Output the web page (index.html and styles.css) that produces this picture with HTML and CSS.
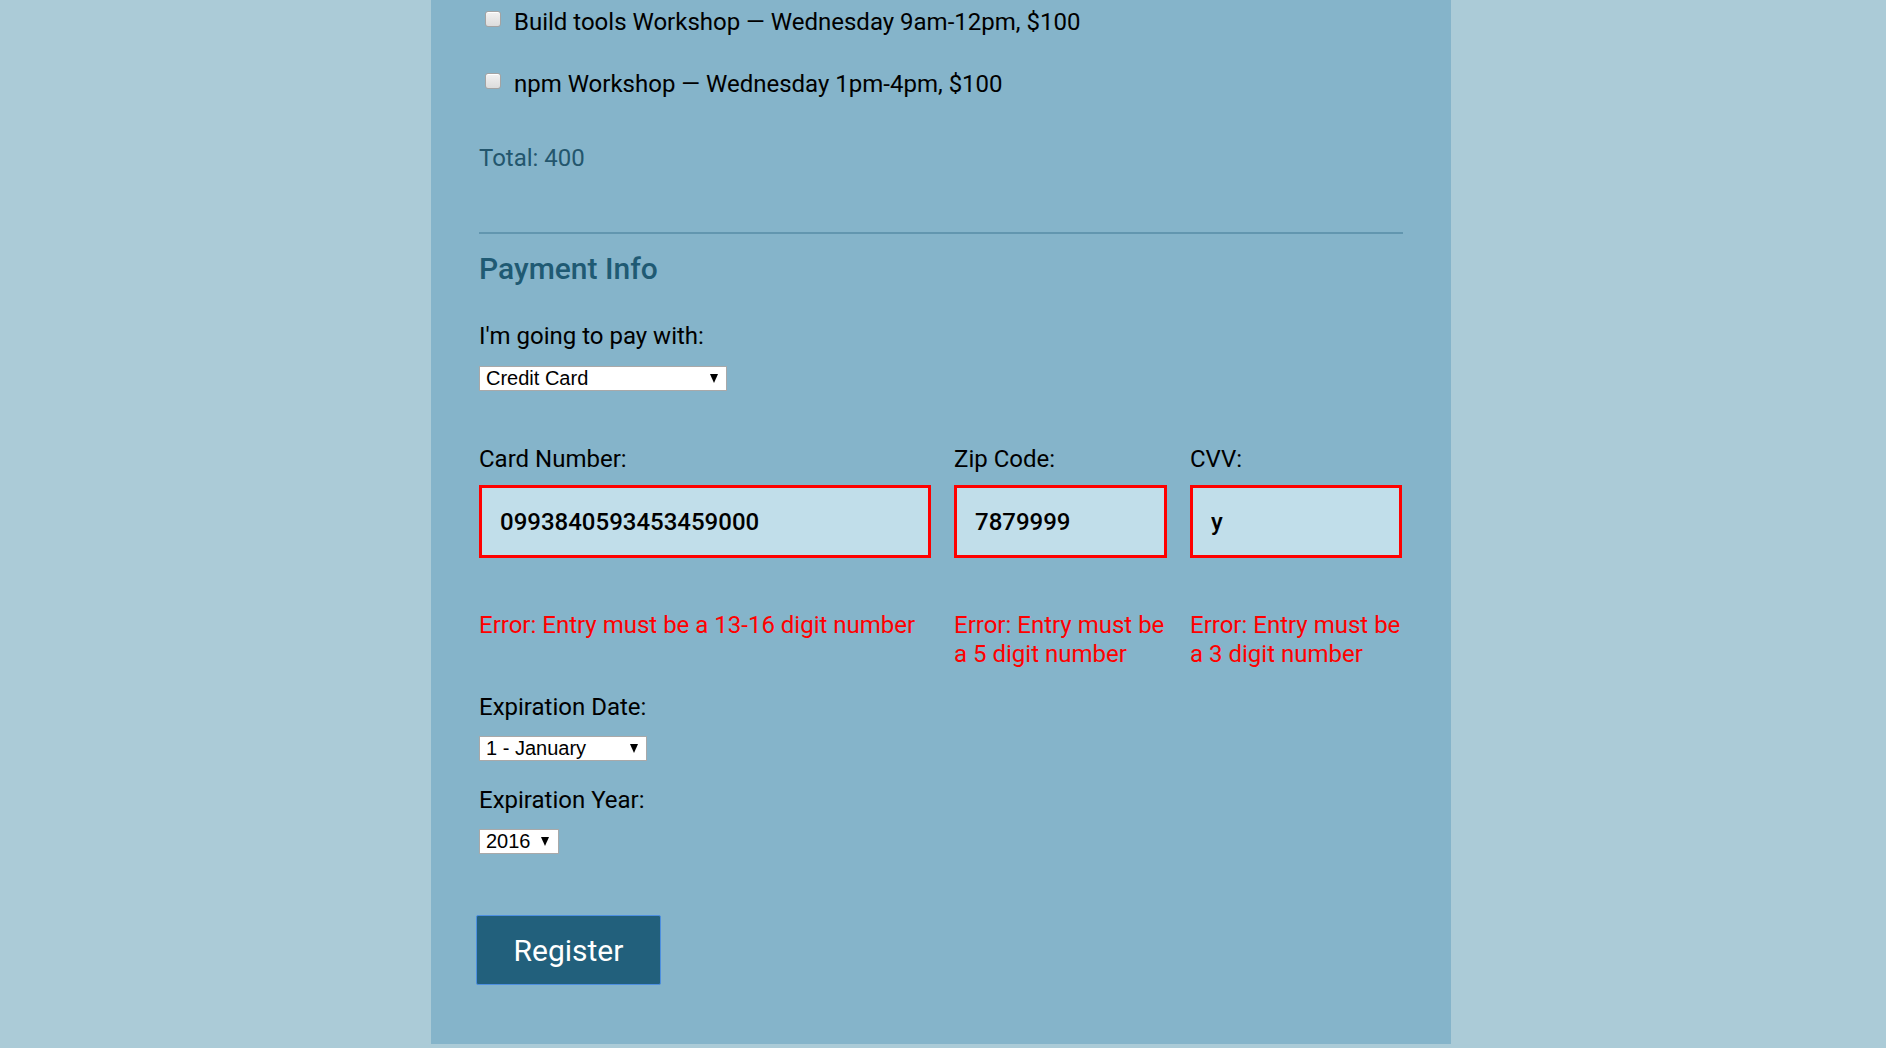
FILE: index.html
```html
<!DOCTYPE html>
<html lang="en">
<head>
<meta charset="utf-8">
<title>Conference Registration</title>
<link rel="stylesheet" href="styles.css">
</head>
<body>
<div class="container">
  <form class="form" action="#" onsubmit="return false;">
    <div class="activities">
      <label class="check"><input class="checkbox" type="checkbox" name="build-tools"> Build tools Workshop — Wednesday 9am-12pm, $100</label>
      <label class="check"><input class="checkbox" type="checkbox" name="npm"> npm Workshop — Wednesday 1pm-4pm, $100</label>
      <p class="total">Total: 400</p>
    </div>

    <div class="payment">
      <h2 class="section-title">Payment Info</h2>

      <label class="field-label" for="payment">I'm going to pay with:</label>
      <div class="select-wrap select-payment">
        <select id="payment" class="select">
          <option>Select Payment Method</option>
          <option selected>Credit Card</option>
          <option>PayPal</option>
          <option>Bitcoin</option>
        </select>
      </div>

      <div class="card-row">
        <div class="card-field">
          <label class="field-label" for="cc-num">Card Number:</label>
          <input id="cc-num" class="text-input invalid" type="text" value="0993840593453459000">
          <p class="error">Error: Entry must be a 13-16 digit number</p>
        </div>
        <div class="card-field">
          <label class="field-label" for="zip">Zip Code:</label>
          <input id="zip" class="text-input invalid" type="text" value="7879999">
          <p class="error">Error: Entry must be a 5 digit number</p>
        </div>
        <div class="card-field">
          <label class="field-label" for="cvv">CVV:</label>
          <input id="cvv" class="text-input invalid" type="text" value="y">
          <p class="error">Error: Entry must be a 3 digit number</p>
        </div>
      </div>

      <label class="field-label exp-label" for="exp-month">Expiration Date:</label>
      <div class="select-wrap select-month">
        <select id="exp-month" class="select">
          <option selected>1 - January</option>
          <option>2 - February</option>
          <option>3 - March</option>
          <option>4 - April</option>
          <option>5 - May</option>
          <option>6 - June</option>
          <option>7 - July</option>
          <option>8 - August</option>
          <option>9 - September</option>
          <option>10 - October</option>
          <option>11 - November</option>
          <option>12 - December</option>
        </select>
      </div>

      <label class="field-label exp-label exp-year-label" for="exp-year">Expiration Year:</label>
      <div class="select-wrap select-year">
        <select id="exp-year" class="select">
          <option selected>2016</option>
          <option>2017</option>
          <option>2018</option>
          <option>2019</option>
          <option>2020</option>
        </select>
      </div>
    </div>

    <button class="register" type="submit">Register</button>
  </form>
</div>
</body>
</html>
```

FILE: styles.css
```css
* {
  box-sizing: border-box;
}

html, body {
  margin: 0;
  padding: 0;
}

body {
  background: #abcbd7;
  font-family: Roboto, "Liberation Sans", sans-serif;
  color: #000;
  padding: 0 4px 4px 0;
}

.container {
  width: 1020px;
  margin: 0 auto;
  background: #85b4ca;
  padding: 8px 48px 59px;
}

.form {
  margin: 0;
}

/* Activities */
.activities {
  display: flex;
  flex-direction: column;
}

.check {
  display: block;
  font-size: 24px;
  line-height: 29px;
  margin-bottom: 33px;
  white-space: nowrap;
}

.check:last-of-type {
  margin-bottom: 0;
}

.checkbox {
  -webkit-appearance: none;
  appearance: none;
  width: 16px;
  height: 16px;
  margin: 0 7px 3px 6px;
  vertical-align: baseline;
  border: 1px solid #a3a3a3;
  border-radius: 3px;
  background: linear-gradient(#f2f2f2, #dcdcdc);
  box-shadow: inset 0 1px 0 #ffffff;
}

.total {
  margin: 45px 0 0;
  font-size: 24px;
  line-height: 29px;
  color: #23566d;
}

/* Payment */
.payment {
  margin-top: 59px;
  border-top: 2px solid #6296af;
  display: flex;
  flex-direction: column;
  align-items: flex-start;
}

.section-title {
  margin: 18px 0 0;
  font-size: 30px;
  line-height: 34px;
  font-weight: 500;
  color: #1f5a73;
}

.field-label {
  display: block;
  font-size: 24px;
  line-height: 29px;
  margin-top: 36px;
}

.select-wrap {
  position: relative;
  margin-top: 15px;
}

.select-wrap::after {
  content: "";
  position: absolute;
  right: 9px;
  top: 8px;
  width: 0;
  height: 0;
  border-left: 4.5px solid transparent;
  border-right: 4.5px solid transparent;
  border-top: 9px solid #000;
  pointer-events: none;
}

.select {
  -webkit-appearance: none;
  appearance: none;
  display: block;
  height: 25px;
  margin: 0;
  padding: 0 0 0 6px;
  border: 1px solid #a9a9a9;
  border-radius: 0;
  background: #fff;
  color: #000;
  font-family: "Liberation Sans", Arial, sans-serif;
  font-size: 20px;
  line-height: 23px;
}

.select-payment .select {
  width: 248px;
}

.select-month .select {
  width: 168px;
}

.select-year .select {
  width: 80px;
}

.select-year::after {
  right: 10px;
}

/* Card row */
.card-row {
  display: grid;
  grid-template-columns: 452px 213px 212px;
  column-gap: 23px;
  width: 100%;
  margin-top: 54px;
}

.card-field {
  display: flex;
  flex-direction: column;
}

.card-field .field-label {
  margin-top: 0;
}

.text-input {
  display: block;
  width: 100%;
  height: 73px;
  margin: 11px 0 0;
  padding: 0 10px 0 18px;
  border: 3px solid #c1deea;
  background: #c1deea;
  font-family: Roboto, sans-serif;
  font-size: 24px;
  font-weight: 500;
  color: #000;
  outline: none;
}

.text-input.invalid {
  border-color: #ff0000;
}

.error {
  margin: 53px 0 0;
  font-size: 24px;
  line-height: 29px;
  color: #ff0000;
}

.exp-label {
  margin-top: 24px;
}

.select-month {
  margin-top: 14px;
}

.exp-year-label {
  margin-top: 25px;
}

.select-year {
  margin-top: 14px;
}

/* Button */
.register {
  display: block;
  width: 185px;
  height: 70px;
  margin: 61px 0 0 -3px;
  padding: 0;
  border: 1px solid #4d8fe0;
  border-radius: 2px;
  background: #22607c;
  color: #fff;
  font-family: Roboto, sans-serif;
  font-size: 30px;
  font-weight: 400;
  cursor: pointer;
}
```
